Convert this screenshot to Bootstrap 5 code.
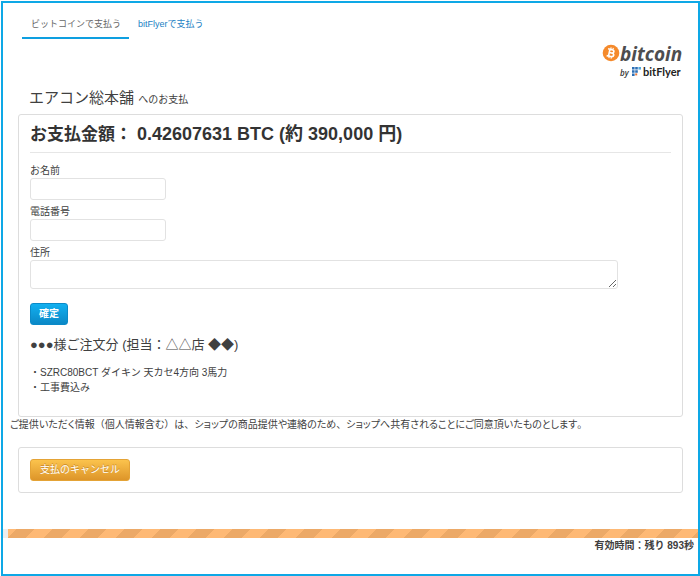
<!DOCTYPE html>
<html lang="ja">
<head>
<meta charset="utf-8">
<meta name="viewport" content="width=device-width, initial-scale=1">
<title>エアコン総本舗 へのお支払</title>
<link href="https://cdn.jsdelivr.net/npm/bootstrap@5.3.0/dist/css/bootstrap.min.css" rel="stylesheet">
<style>
  body { font: 10px/15px "Liberation Sans", "Noto Sans CJK JP", sans-serif; color: #404040; background: #fff; padding: 1px 0 0 1px; }
  .page-frame { min-height: calc(100vh - 1px); border: 2px solid #0ea8e6; }
  .pay-tabs { padding: 7px 19px 0; font-size: 9px; line-height: 14px; }
  .pay-tabs .nav-link { padding: 7px 8px 6px 9px; color: #1b7fc4; border-bottom: 2px solid transparent; }
  .pay-tabs .nav-link.active { color: #666; border-color: #0e9fe0; }
  .brand { padding: 4px 15px 0; }
  .shop-title { font-size: 15px; line-height: 20px; padding: 7px 26px 0; margin: 0 0 4px; font-weight: 400; }
  .shop-title small { font-size: 10px; }
  .panel { margin: 0 15px; padding: 0 11px; border: 1px solid #ddd; border-radius: 3px; }
  .amount { font-size: 18px; line-height: 24px; font-weight: 700; color: #333; margin: 0 0 10px; padding: 7px 0 5px; border-bottom: 1px solid #e6e6e6; }
  .amount-label { font-size: 17px; }
  .panel label { display: block; line-height: 15px; }
  .panel .form-control { font-size: 10px; line-height: 14px; padding: 3px 5px; border: 1px solid #e2e2e2; border-radius: 3px; margin-bottom: 4px; }
  .panel input.form-control { width: 136px; height: 22px; }
  .panel textarea.form-control { width: calc(100% - 53px); height: 29px; min-height: 29px; margin-bottom: 14px; }
  .panel .btn { font-size: 10px; line-height: 14px; padding: 3px 8px; border-radius: 3px; color: #fff; }
  .btn-confirm { background: linear-gradient(#12b0f0, #0b88c6); border-color: #0b8ac8; font-weight: 700; }
  .panel .btn-cancel { padding: 3px 9px; background: linear-gradient(#fbc34d, #dd9529); border-color: #e4a336; text-shadow: 0 -1px 0 #c98a2a; }
  .order-title { font-size: 13px; line-height: 20px; font-weight: 400; margin: 10px 0; }
  .order-lines { margin: 0 0 21px; }
  .consent { margin: 0 0 15px; padding: 0 7px; }
  .consent span { font-feature-settings: "palt"; }
  .cancel-panel { padding-top: 11px; padding-bottom: 11px; margin-bottom: 36px; }
  .time-track { height: 9px; padding-left: 5px; background: #eee; border-radius: 0; }
  .time-left { width: 100%; background: linear-gradient(-45deg, #feb975 25%, #eca967 25%, #eca967 50%, #feb975 50%, #feb975 75%, #eca967 75%) left bottom / 36px 36px; }
  .time-text { padding: 0 4px; font-weight: 700; }
</style>
<script src="https://cdn.jsdelivr.net/npm/bootstrap@5.3.0/dist/js/bootstrap.bundle.min.js"></script>
</head>
<body>
<div class="page-frame">
  <nav class="nav pay-tabs">
    <a class="nav-link active" aria-current="page" href="#bitcoin">ビットコインで支払う</a>
    <a class="nav-link" href="#bitflyer">bitFlyerで支払う</a>
  </nav>
  <div class="brand d-flex justify-content-end">
    <svg class="overflow-visible" width="82" height="38" viewBox="0 0 82 38" role="img" aria-label="bitcoin by bitFlyer">
      <circle cx="10" cy="10" r="8.3" fill="#f58a2b"/>
      <g fill="none" stroke="#fff" stroke-width="1.6" transform="rotate(12 10 10)">
        <path d="M6.3 6.5H10.5C13.2 6.5 13.2 9.8 10.5 9.8H8.2M10.5 9.8C14 9.8 14 13.5 10.5 13.5H6.3M8.2 6.5V13.5"/>
        <path stroke-width="1.1" d="M9 4.5V6.2M11.2 4.5V6.2M9 13.8V15.5M11.2 13.8V15.5"/>
      </g>
      <text x="19" y="18" font-family="Open Sans, sans-serif" font-size="19" font-weight="700" font-style="italic" fill="#4d4d4f">bitcoin</text>
      <text x="19" y="33" font-family="Open Sans, sans-serif" font-size="8" font-style="italic" font-weight="600" fill="#333">by</text>
      <g fill="#2d6fb5">
        <path d="M31 24h2.6v2.6H31zM31 27.2h2.6v2.6H31zM31 30.4h2.6v2.6H31zM34.2 27.2h2.6v2.6h-2.6zM34.2 24h2.6v2.6h-2.6z"/>
        <path d="M34.2 30.4h2v2h-2z" fill="#e9783c"/>
        <path d="M37.4 24H40v2.6h-2.6z" fill="#55a8dc"/>
      </g>
      <text x="42" y="33" font-family="Lato, sans-serif" font-size="11" font-weight="700" fill="#222">bitFlyer</text>
    </svg>
  </div>
  <h1 class="shop-title">エアコン総本舗 <small>へのお支払</small></h1>
  <main>
    <section class="panel">
      <h2 class="amount"><span class="amount-label">お支払金額：</span> 0.42607631 BTC (約 390,000 円)</h2>
      <form>
        <label for="name">お名前</label>
        <input class="form-control" id="name" type="text">
        <label for="tel">電話番号</label>
        <input class="form-control" id="tel" type="tel">
        <label for="address">住所</label>
        <textarea class="form-control" id="address" rows="1"></textarea>
        <button class="btn btn-confirm" type="submit">確定</button>
      </form>
      <h3 class="order-title">●●●様ご注文分 (担当：△△店 ◆◆)</h3>
      <p class="order-lines">・SZRC80BCT ダイキン 天カセ4方向 3馬力<br>・工事費込み</p>
    </section>
    <p class="consent"><span>ご提供いただく情報</span>（<span>個人情報含む</span>）<span>は</span>、<span>ショップの商品提供や連絡のため</span>、<span>ショップへ共有されることにご同意頂いたものとします</span>。</p>
    <section class="panel cancel-panel">
      <button class="btn btn-cancel d-block" type="button">支払のキャンセル</button>
    </section>
  </main>
  <div class="progress time-track" role="progressbar" aria-label="有効時間">
    <div class="progress-bar time-left"></div>
  </div>
  <div class="time-text text-end">有効時間：残り 893秒</div>
</div>
</body>
</html>
